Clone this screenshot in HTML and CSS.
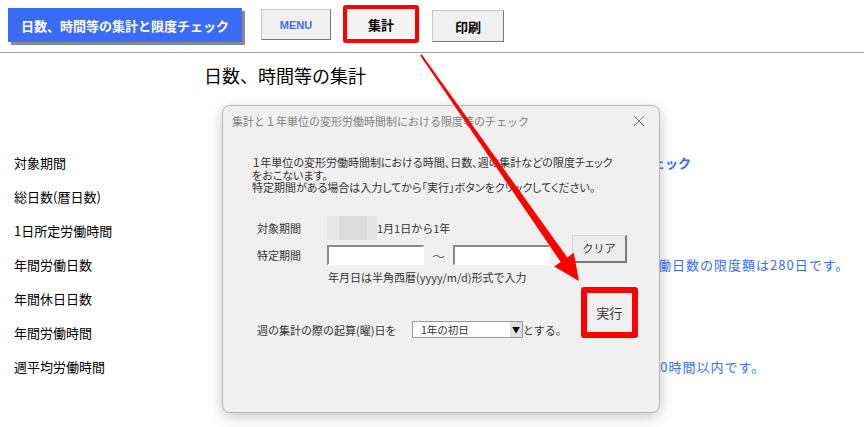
FILE: index.html
```html
<!DOCTYPE html>
<html lang="ja">
<head>
    <meta charset="UTF-8">
    <title>日数、時間等の集計</title>
    <link rel="stylesheet" href="styles.css">
</head>
<body>

<div class="toolbar">
    <div class="sheet-title">日数、時間等の集計と限度チェック</div>
    <button class="sheet-btn menu">MENU</button>
    <div class="highlight">
        <button class="sheet-btn">集計</button>
    </div>
    <button class="sheet-btn print">印刷</button>
</div>

<h2 class="page-title">日数、時間等の集計</h2>

<div class="rows">
    <div class="row"><span class="label">対象期間</span><span class="note bold n1">１年単位の変形労働時間制の限度チェック</span></div>
    <div class="row"><span class="label">総日数(暦日数)</span></div>
    <div class="row"><span class="label">1日所定労働時間</span></div>
    <div class="row"><span class="label">年間労働日数</span><span class="note n4">この期間の年間労働日数の限度額は280日です。</span></div>
    <div class="row"><span class="label">年間休日日数</span></div>
    <div class="row"><span class="label">年間労働時間</span></div>
    <div class="row"><span class="label">週平均労働時間</span><span class="note n7">週平均労働時間は40時間以内です。</span></div>
</div>

<div class="dialog">
    <div class="dialog-head">
        <span>集計と１年単位の変形労働時間制における限度等のチェック</span>
        <svg class="close" width="12" height="12" viewBox="0 0 12 12">
            <path d="M1 1 L11 11 M11 1 L1 11" stroke="#777" stroke-width="1" fill="none"/>
        </svg>
    </div>
    <div class="dialog-body">
        <p class="intro">１年単位の変形労働時間制における時間、日数、週の集計などの限度チェック<br>をおこないます。</p>
        <p class="intro">特定期間がある場合は入力してから「実行」ボタンをクリックしてください。</p>

        <div class="form-row first">
            <span class="f-label">対象期間</span>
            <span class="blur"></span>
            <span>1月1日から1年</span>
        </div>
        <div class="form-row">
            <span class="f-label">特定期間</span>
            <span class="text-box"></span>
            <span class="tilde">～</span>
            <span class="text-box"></span>
            <button class="win-btn clear">クリア</button>
        </div>
        <div class="hint">年月日は半角西暦(yyyy/m/d)形式で入力</div>

        <div class="form-row last">
            <span class="f-label">週の集計の際の起算(曜)日を</span>
            <span class="combo"><span class="combo-text">1年の初日</span><span class="combo-arrow">&#9660;</span></span>
            <span class="suffix">とする。</span>
            <div class="run-frame">
                <button class="win-btn run">実行</button>
            </div>
        </div>
    </div>
</div>

<svg class="arrow" width="864" height="427" viewBox="0 0 864 427">
    <polygon fill="#ff0000" points="421.8,54.4 567.3,257.4 573.8,252.8 579,281 554.2,266.6 560.7,262 420.2,55.6"/>
</svg>

</body>
</html>
```

FILE: styles.css
```css
body {
    margin: 0;
    background: #fff;
    font-family: "Noto Sans CJK JP", "Liberation Sans", sans-serif;
    color: #000;
    width: 864px;
    height: 427px;
    overflow: hidden;
    position: relative;
}

.toolbar {
    display: flex;
    align-items: flex-start;
    height: 52px;
    border-bottom: 1px solid #a8a8a8;
    padding-left: 8px;
}

.sheet-title {
    margin-top: 8px;
    width: 234px;
    height: 34px;
    background: #3a6cf8;
    color: #fff;
    font-size: 13px;
    font-weight: bold;
    display: flex;
    align-items: center;
    justify-content: center;
    box-shadow: 3px 3px 0 #8a8a8a;
}

.sheet-btn {
    font-family: inherit;
    background: #f0f0f0;
    border: 1px solid #c8c8c8;
    border-right-color: #777;
    border-bottom-color: #777;
    font-size: 13px;
    font-weight: bold;
    color: #000;
    padding: 0;
}

.menu {
    margin-left: 19px;
    margin-top: 9px;
    width: 70px;
    height: 31px;
    color: #3a6cf8;
    font-size: 11px;
    font-family: "Liberation Sans", sans-serif;
}

.highlight {
    margin-left: 12px;
    margin-top: 5px;
    width: 76px;
    height: 38px;
    box-sizing: border-box;
    border: 4px solid #ff0000;
    border-radius: 3px;
    display: flex;
}

.highlight .sheet-btn {
    flex: 1;
    background: #f4f4f4;
    border: none;
}

.print {
    margin-left: 13px;
    margin-top: 10px;
    width: 72px;
    height: 32px;
}

.page-title {
    margin: 10px 0 0 204px;
    font-size: 18px;
    font-weight: normal;
    line-height: 24px;
}

.rows {
    margin-top: 59px;
}

.row {
    display: flex;
    height: 34px;
    line-height: 34px;
    font-size: 13px;
}

.label {
    width: 540px;
    padding-left: 14px;
}

.note {
    color: #3a6cf8;
    white-space: nowrap;
    letter-spacing: 1px;
}

.bold {
    font-weight: bold;
    letter-spacing: 0;
}

.n1 { margin-left: -110px; }
.n4 { margin-left: -8px; }
.n7 { margin-left: -14px; }

.dialog {
    position: absolute;
    left: 222px;
    top: 105px;
    width: 438px;
    height: 308px;
    box-sizing: border-box;
    background: #f0f0f0;
    border: 1px solid #b9b9b9;
    border-radius: 8px;
    box-shadow: 0 4px 14px rgba(0, 0, 0, 0.22);
    color: #333;
}

.dialog-head {
    display: flex;
    justify-content: space-between;
    align-items: center;
    height: 30px;
    padding: 0 10px 0 9px;
    font-size: 11px;
    color: #808080;
}

.close {
    margin-right: 4px;
}

.dialog-body {
    padding: 20px 0 0 29px;
    font-size: 11px;
}

.intro {
    margin: 0;
    line-height: 12.5px;
    font-feature-settings: "palt";
}

.form-row {
    display: flex;
    align-items: center;
    height: 27px;
    white-space: nowrap;
}

.form-row.first {
    margin-top: 20px;
    height: 28px;
}

.f-label {
    margin-left: 5px;
    width: 70px;
}

.blur {
    width: 50px;
    height: 24px;
    background: linear-gradient(90deg, #e8e8e8 0, #e8e8e8 12px, #dcdcdc 12px, #dcdcdc 40px, #e4e4e4 40px);
}

.text-box {
    width: 97px;
    height: 20px;
    box-sizing: border-box;
    background: #fff;
    border: 1px solid #fff;
    border-top: 2px solid #8a8a8a;
    border-left: 2px solid #8a8a8a;
}

.tilde {
    width: 29px;
    text-align: center;
    font-size: 13px;
    color: #666;
}

.win-btn {
    font-family: inherit;
    font-size: 11px;
    color: #333;
    background: #ececec;
    border: 1px solid #d8d8d8;
    border-right: 2px solid #7a7a7a;
    border-bottom: 2px solid #7a7a7a;
    padding: 0;
}

.clear {
    margin-left: 22px;
    margin-top: -13px;
    width: 55px;
    height: 28px;
}

.hint {
    margin-left: 76px;
    line-height: 16px;
}

.form-row.last {
    margin-top: 2px;
    height: 51px;
    align-items: flex-end;
}

.form-row.last > span {
    line-height: 18px;
    margin-bottom: -1px;
}

.form-row.last .f-label {
    width: 155px;
}

.form-row.last .combo {
    margin-bottom: 0;
}

.combo {
    display: flex;
    width: 111px;
    height: 17px;
    box-sizing: border-box;
    background: #fff;
    border: 1px solid #999;
}

.combo-text {
    flex: 1;
    padding-left: 8px;
    font-size: 10.5px;
    line-height: 15px;
}

.combo-arrow {
    width: 12px;
    font-size: 8px;
    line-height: 15px;
    text-align: center;
    background: #e0e0e0;
    color: #000;
}

.run-frame {
    margin-left: 14px;
    width: 57px;
    height: 51px;
    box-sizing: border-box;
    border: 6px solid #ff0000;
    border-radius: 3px;
    display: flex;
}

.run {
    flex: 1;
    border: none;
    background: #f0f0f0;
    font-size: 13px;
}

.arrow {
    position: absolute;
    left: 0;
    top: 0;
    pointer-events: none;
}
```
